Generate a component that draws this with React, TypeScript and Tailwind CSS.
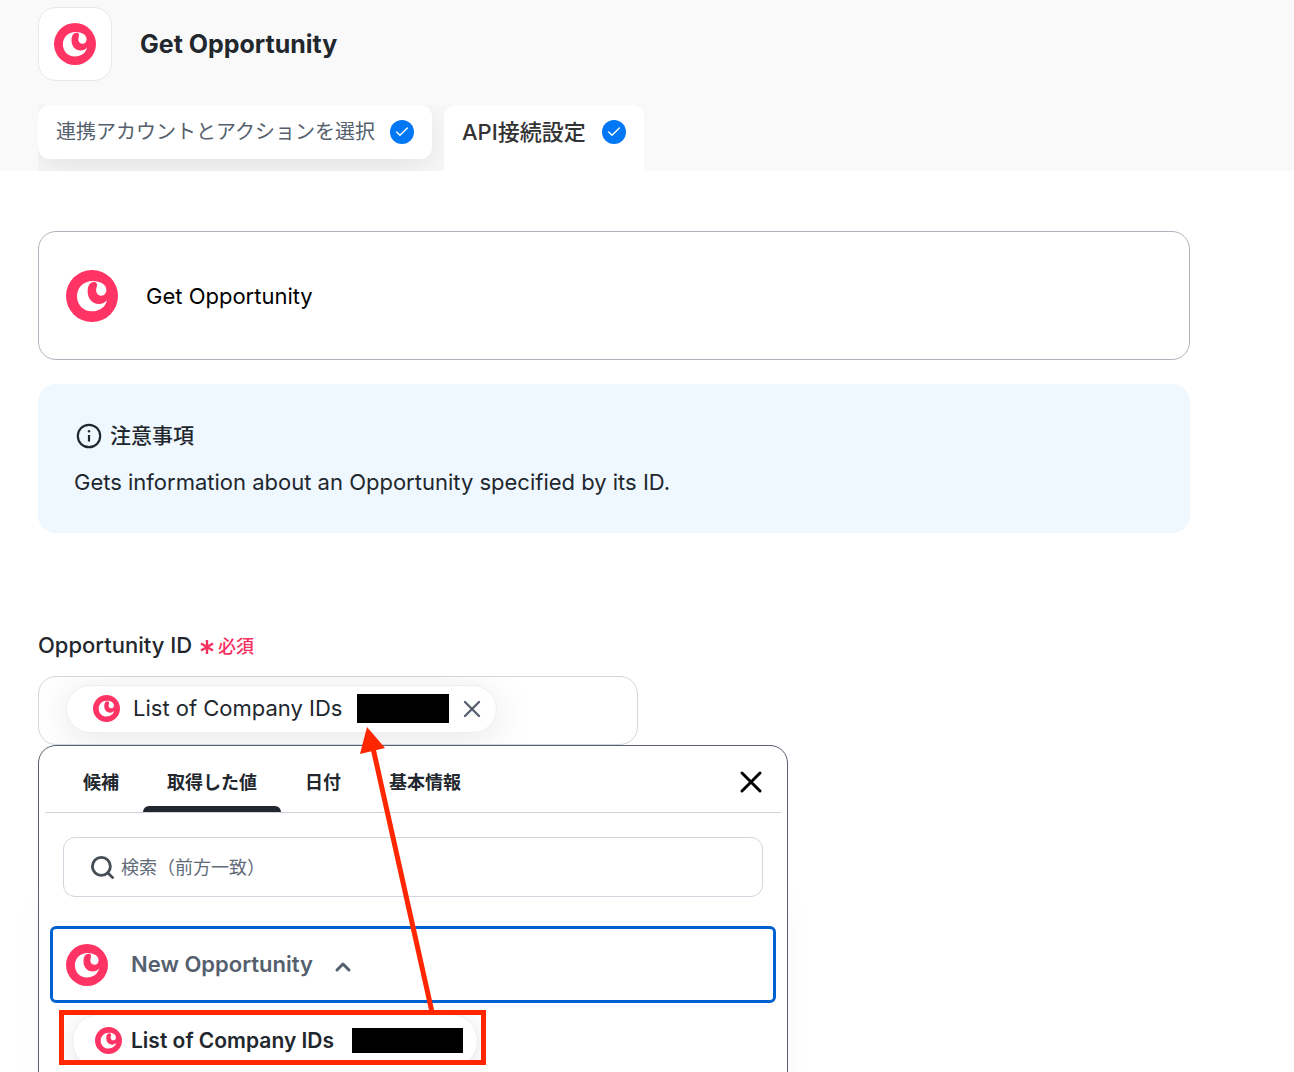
import { useState } from "react";
import { Check, ChevronUp, Search, X } from "lucide-react";

function CopperLogo({ className }: { className: string }) {
  return (
    <svg viewBox="0 0 156 156" className={className} aria-hidden="true">
      <circle cx="78" cy="78" r="78" fill="#ff3465" />
      <path
        d="M80 33C53 33 33 52 33 79c0 26 19 45 44 45 24 0 42-13 46-34-6 8-14 12-24 12-21 0-34-16-34-38 0-17 7-28 18-28 9 0 12 6 9 15-5 14 2 26 14 26 9 0 15-8 15-17 0-16-17-27-41-27z"
        fill="#fff"
      />
    </svg>
  );
}

function DoneBadge() {
  return (
    <span className="flex size-6 items-center justify-center rounded-full bg-[#0077f5] text-white">
      <Check size={16} strokeWidth={2} />
    </span>
  );
}

function InfoIcon() {
  return (
    <svg viewBox="0 0 26 26" className="size-[26px]" fill="none" aria-hidden="true">
      <circle cx="13" cy="13" r="11.2" stroke="#22272e" strokeWidth="2.2" />
      <circle cx="13" cy="8.2" r="1.2" fill="#22272e" />
      <path d="M13 12v6.5" stroke="#22272e" strokeWidth="2.2" />
    </svg>
  );
}

const pickerTabs = ["候補", "取得した値", "日付", "基本情報"];

export default function App() {
  const [activeTab, setActiveTab] = useState("取得した値");
  const [query, setQuery] = useState("");

  return (
    <div className="relative h-screen overflow-hidden bg-white font-['Inter','Noto_Sans_CJK_JP',sans-serif] text-[#22272e]">
      <header className="bg-[#f9f9f9] pt-[7px] pl-[38px]">
        <div className="flex items-center gap-7">
          <div className="flex size-[74px] items-center justify-center rounded-[18px] border border-[#e8e8e8] bg-white">
            <CopperLogo className="size-[42px]" />
          </div>
          <h1 className="text-[25px] leading-8 font-bold">Get Opportunity</h1>
        </div>

        <nav className="mt-6 flex h-[66px] w-fit items-start gap-3 overflow-hidden">
          <button className="flex h-[54px] items-center gap-[15px] rounded-xl bg-white px-[18px] text-xl text-[#555f6d] shadow-[0_8px_36px_rgba(0,0,0,0.1)]">
            連携アカウントとアクションを選択
            <DoneBadge />
          </button>
          <button className="z-10 flex h-[66px] items-center gap-4 rounded-t-xl bg-white px-[18px] pb-3 text-[22px] font-medium text-[#333]">
            API接続設定
            <DoneBadge />
          </button>
        </nav>
      </header>

      <main className="pt-[60px] pr-[104px] pl-[38px]">
        <section className="flex h-[129px] items-center gap-7 rounded-[18px] border border-[#aeb5be] px-[27px]">
          <CopperLogo className="size-[52px]" />
          <p className="text-[22px] leading-8 text-black">Get Opportunity</p>
        </section>

        <section className="mt-6 h-[149px] rounded-[18px] bg-[#eff7ff] px-9 pt-9">
          <h2 className="flex items-center gap-2 pl-[2px] text-[21px] leading-8 font-medium">
            <InfoIcon />
            注意事項
          </h2>
          <p className="mt-[14px] text-[22px] leading-8">
            Gets information about an Opportunity specified by its ID.
          </p>
        </section>

        <section className="mt-24">
          <h3 className="flex items-center gap-2 text-[22px] leading-8 font-medium">
            Opportunity ID
            <span className="flex items-center gap-1 pt-1 text-lg text-[#f52f5f]">
              <svg viewBox="0 0 14 14" className="size-[14px]" aria-hidden="true">
                <path
                  d="M7 0v14M1 3.5l12 7M13 3.5l-12 7"
                  stroke="currentColor"
                  strokeWidth="2.4"
                />
              </svg>
              必須
            </span>
          </h3>

          <div className="mt-[15px] flex h-[69px] max-w-[600px] items-center overflow-hidden rounded-[18px] border border-[#d0d6dd] px-[27px] pb-1">
            <div className="flex h-12 w-[431px] items-center rounded-full border border-[#eceef1] bg-white pr-[10px] pl-[26px] shadow-[0_6px_40px_rgba(0,0,0,0.1)]">
              <CopperLogo className="size-[27px]" />
              <span className="ml-[13px] flex-1 text-[22px] whitespace-nowrap">List of Company IDs</span>
              <span className="h-[29px] w-[92px] bg-black" />
              <button className="ml-[9px] text-[#555f6d]" aria-label="削除">
                <X size={28} strokeWidth={2} />
              </button>
            </div>
          </div>

          <div className="h-[360px] max-w-[750px] rounded-t-[18px] border border-[#57606b] bg-white shadow-[0_150px_30px_rgba(0,0,0,0.03)]">
            <div className="mx-[6px] flex h-[67px] items-center border-b border-[#ccd3dc]">
              {pickerTabs.map((tab) => (
                <button
                  key={tab}
                  onClick={() => setActiveTab(tab)}
                  className="relative h-full px-6 pt-2 text-lg font-bold first:ml-[14px]"
                >
                  {tab}
                  {activeTab === tab && (
                    <span className="absolute inset-x-0 bottom-0 h-[6px] rounded-t-md bg-[#22272e]" />
                  )}
                </button>
              ))}
              <button className="mr-3 ml-auto pt-[6px] text-black" aria-label="閉じる">
                <X size={36} strokeWidth={2} />
              </button>
            </div>

            <label className="mx-6 mt-6 flex h-[60px] items-center gap-[5px] rounded-xl border border-[#d0d6dd] pl-[25px]">
              <Search size={27} strokeWidth={2.5} className="text-[#444c56]" />
              <input
                type="text"
                aria-label="検索"
                placeholder="検索（前方一致）"
                value={query}
                onChange={(e) => setQuery(e.target.value)}
                className="flex-1 pt-[2px] text-lg outline-none placeholder:text-[#626c79]"
              />
            </label>

            <button className="mx-[11px] mt-[29px] flex h-[77px] w-[calc(100%-22px)] items-center rounded-md border-3 border-[#0061d0] px-[13px] text-[#555f6d]">
              <CopperLogo className="size-[42px]" />
              <span className="ml-[23px] text-[22px] font-semibold">New Opportunity</span>
              <ChevronUp size={28} strokeWidth={3} className="ml-4 pt-1" />
            </button>

            <div className="mt-[7px] ml-5 flex h-[55px] w-[427px] items-center overflow-hidden border-5 border-[#ff2600] pt-[6px] pl-2">
              <button className="flex h-[54px] w-[406px] shrink-0 items-center rounded-full border border-[#eceef1] bg-white pr-[14px] pl-[22px] shadow-[0_6px_30px_rgba(0,0,0,0.1)]">
                <CopperLogo className="size-[27px]" />
                <span className="ml-[9px] flex-1 text-left text-[21px] font-semibold whitespace-nowrap">
                  List of Company IDs
                </span>
                <span className="h-[25px] w-[111px] bg-black" />
              </button>
            </div>
          </div>
        </section>
      </main>

      {/* arrow from the picked value up to the field */}
      <svg
        viewBox="0 0 80 290"
        className="pointer-events-none absolute top-[725px] left-[358px] h-[290px] w-[80px]"
        aria-hidden="true"
      >
        <path d="M74 287L15 23" stroke="#ff2600" strokeWidth="5" />
        <path d="M9 2L27 23L2 29z" fill="#ff2600" />
      </svg>
    </div>
  );
}
